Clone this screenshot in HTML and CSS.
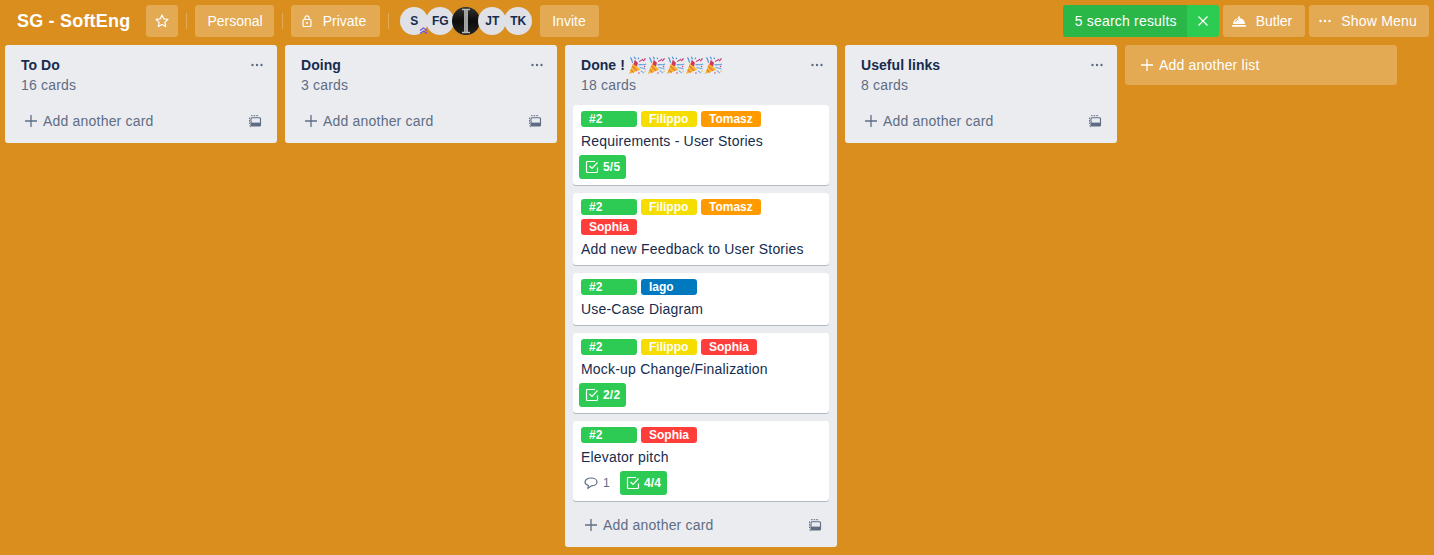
FILE: index.html
```html
<!DOCTYPE html>
<html>
<head>
    <title>SG - SoftEng</title>
    <link rel="stylesheet" href="styles.css">
</head>
<body>
    <svg class="defs" width="0" height="0">
        <symbol id="popper" viewBox="0 0 20 20">
            <path d="M1 19 L5.500 7 L13 14.500 Z" fill="#f5b52e"/>
            <path d="M3 14.500 L6 17.500 M4.500 10.500 L9.500 15.500" stroke="#e8793a" stroke-width="1.200"/>
            <path d="M6 9 L7 4 L10.500 7 L9.500 11 Z" fill="#d1365f"/>
            <path d="M5 7 C3.500 5 4.500 3 2.500 1.500 M8 3.500 L6.500 .8" stroke="#4a8fd6" stroke-width="1.200" fill="none"/>
            <path d="M12 6 C13 4 15 5.500 15.500 3 M16 5.500 L18.500 2.500" stroke="#c73a78" stroke-width="1.300" fill="none"/>
            <path d="M11 9.500 C13.500 8 16 10.500 19 8.500" stroke="#5b9ddd" stroke-width="1.200" fill="none"/>
            <path d="M12 12 L18.500 13.500 M13.500 15.500 L17 18" stroke="#7fb0e0" stroke-width="1.200"/>
            <circle cx="11" cy="2.500" r=".8" fill="#4a8fd6"/>
            <circle cx="17.500" cy="11" r=".8" fill="#c73a78"/>
            <circle cx="11.500" cy="18" r=".8" fill="#c73a78"/>
            <circle cx="18" cy="16" r=".7" fill="#f5b52e"/>
        </symbol>
        <symbol id="plus" viewBox="0 0 14 14">
            <path d="M7 1 V13 M1 7 H13" stroke="currentColor" stroke-width="1.300" fill="none"/>
        </symbol>
        <symbol id="template" viewBox="0 0 14 14">
            <path d="M3 1.700 H11 M1.500 3.500 V10 M12.500 4 V5" stroke="currentColor" stroke-width="1" fill="none" stroke-dasharray="1.600 1"/>
            <rect x="3" y="3.700" width="9.500" height="8.300" rx="1" fill="none" stroke="currentColor" stroke-width="1.100"/>
            <rect x="3" y="8.600" width="9.500" height="3.400" fill="currentColor"/>
            <path d="M2 11 V12 a1 1 0 0 0 1 1" stroke="currentColor" stroke-width=".8" fill="none"/>
        </symbol>
        <symbol id="dots" viewBox="0 0 14 4">
            <circle cx="2.500" cy="2" r="1.200" fill="currentColor"/>
            <circle cx="7" cy="2" r="1.200" fill="currentColor"/>
            <circle cx="11.500" cy="2" r="1.200" fill="currentColor"/>
        </symbol>
        <symbol id="check" viewBox="0 0 14 14">
            <path d="M12.500 7.500 V11.500 a1 1 0 0 1 -1 1 H2.500 a1 1 0 0 1 -1 -1 V2.500 a1 1 0 0 1 1 -1 H10" fill="none" stroke="currentColor" stroke-width="1.200"/>
            <path d="M4.500 6 L7 8.500 L12.500 2.500" fill="none" stroke="currentColor" stroke-width="1.200"/>
        </symbol>
    </svg>

    <header class="board-header">
        <h1 class="board-name">SG - SoftEng</h1>
        <a class="btn btn-icon">
            <svg width="14" height="14" viewBox="0 0 14 14"><path d="M7 1 L8.800 4.900 L13 5.400 L9.900 8.300 L10.700 12.600 L7 10.500 L3.300 12.600 L4.100 8.300 L1 5.400 L5.200 4.900 Z" fill="none" stroke="#fff" stroke-width="1.200" stroke-linejoin="round"/></svg>
        </a>
        <span class="sep"></span>
        <a class="btn btn-team">Personal</a>
        <span class="sep"></span>
        <a class="btn btn-private">
            <svg width="12" height="14" viewBox="0 0 12 14"><rect x="2" y="5.500" width="8" height="7" rx="1" fill="none" stroke="#fff" stroke-width="1.200"/><path d="M4 5.500 V3.800 a2 2 0 0 1 4 0 V5.500" fill="none" stroke="#fff" stroke-width="1.200"/><circle cx="6" cy="9" r="1" fill="#fff"/></svg>
            Private
        </a>
        <span class="sep"></span>
        <div class="members">
            <span class="avatar">S
                <svg class="admin-mark" width="9" height="8" viewBox="0 0 9 8"><path d="M1 3.500 L4.500 1 L8 3.500 M1 6.500 L4.500 4 L8 6.500" fill="none" stroke="#6b4fd8" stroke-width="1.100"/></svg>
            </span>
            <span class="avatar">FG</span>
            <span class="avatar avatar-dark">
                <svg width="28" height="28" viewBox="0 0 28 28"><path d="M10 2.500 H18 M10 25.500 H18" stroke="#b8b8b8" stroke-width="1.500"/><rect x="12.200" y="3" width="3.600" height="22" fill="#c9c9c9"/><rect x="13.200" y="3" width="1.400" height="22" fill="#8d8d8d"/></svg>
            </span>
            <span class="avatar">JT</span>
            <span class="avatar">TK</span>
        </div>
        <a class="btn btn-invite">Invite</a>
        <div class="header-right">
            <div class="search-results">
                <span class="search-count">5 search results</span>
                <span class="search-clear">
                    <svg width="12" height="12" viewBox="0 0 12 12"><path d="M1.500 1.500 L10.500 10.500 M10.500 1.500 L1.500 10.500" stroke="#fff" stroke-width="1.200"/></svg>
                </span>
            </div>
            <a class="btn btn-butler">
                <svg width="16" height="14" viewBox="0 0 16 14"><path d="M2 10 a6 6 0 0 1 12 0 Z" fill="#fff"/><path d="M4.500 8 a4 4 0 0 1 3 -3" stroke="#da8e1e" stroke-width=".8" fill="none"/><rect x="1" y="11" width="14" height="1.800" rx=".9" fill="#fff"/><circle cx="8" cy="3.200" r="1" fill="#fff"/></svg>
                Butler
            </a>
            <a class="btn btn-menu">
                <svg class="menu-dots" width="14" height="4"><use href="#dots"/></svg>
                Show Menu
            </a>
        </div>
    </header>

    <main class="board">
        <section class="list">
            <div class="list-head">
                <h2>To Do</h2>
                <p>16 cards</p>
                <svg class="list-dots" width="14" height="4"><use href="#dots"/></svg>
            </div>
            <div class="add-card">
                <svg width="14" height="14"><use href="#plus"/></svg>
                <span>Add another card</span>
                <svg class="tpl" width="14" height="14"><use href="#template"/></svg>
            </div>
        </section>

        <section class="list">
            <div class="list-head">
                <h2>Doing</h2>
                <p>3 cards</p>
                <svg class="list-dots" width="14" height="4"><use href="#dots"/></svg>
            </div>
            <div class="add-card">
                <svg width="14" height="14"><use href="#plus"/></svg>
                <span>Add another card</span>
                <svg class="tpl" width="14" height="14"><use href="#template"/></svg>
            </div>
        </section>

        <section class="list">
            <div class="list-head">
                <h2>Done !
                    <span class="poppers">
                        <svg width="19" height="19"><use href="#popper"/></svg>
                        <svg width="19" height="19"><use href="#popper"/></svg>
                        <svg width="19" height="19"><use href="#popper"/></svg>
                        <svg width="19" height="19"><use href="#popper"/></svg>
                        <svg width="19" height="19"><use href="#popper"/></svg>
                    </span>
                </h2>
                <p>18 cards</p>
                <svg class="list-dots" width="14" height="4"><use href="#dots"/></svg>
            </div>

            <article class="card">
                <div class="labels">
                    <span class="label green">#2</span>
                    <span class="label yellow">Filippo</span>
                    <span class="label orange">Tomasz</span>
                </div>
                <div class="card-title">Requirements - User Stories</div>
                <div class="badges">
                    <span class="badge-check"><svg width="14" height="14"><use href="#check"/></svg>5/5</span>
                </div>
            </article>

            <article class="card">
                <div class="labels">
                    <span class="label green">#2</span>
                    <span class="label yellow">Filippo</span>
                    <span class="label orange">Tomasz</span>
                    <span class="label red">Sophia</span>
                </div>
                <div class="card-title">Add new Feedback to User Stories</div>
            </article>

            <article class="card">
                <div class="labels">
                    <span class="label green">#2</span>
                    <span class="label blue">Iago</span>
                </div>
                <div class="card-title">Use-Case Diagram</div>
            </article>

            <article class="card">
                <div class="labels">
                    <span class="label green">#2</span>
                    <span class="label yellow">Filippo</span>
                    <span class="label red">Sophia</span>
                </div>
                <div class="card-title">Mock-up Change/Finalization</div>
                <div class="badges">
                    <span class="badge-check"><svg width="14" height="14"><use href="#check"/></svg>2/2</span>
                </div>
            </article>

            <article class="card">
                <div class="labels">
                    <span class="label green">#2</span>
                    <span class="label red">Sophia</span>
                </div>
                <div class="card-title">Elevator pitch</div>
                <div class="badges">
                    <span class="badge-comment">
                        <svg width="14" height="14" viewBox="0 0 14 14"><path d="M7 2 C10.500 2 13 3.700 13 6 C13 8.300 10.500 9.800 7.500 9.800 L4 12.200 L4.300 9.400 C2.300 8.800 1 7.600 1 6 C1 3.700 3.500 2 7 2 Z" fill="none" stroke="currentColor" stroke-width="1.200"/></svg>
                        1
                    </span>
                    <span class="badge-check"><svg width="14" height="14"><use href="#check"/></svg>4/4</span>
                </div>
            </article>

            <div class="add-card">
                <svg width="14" height="14"><use href="#plus"/></svg>
                <span>Add another card</span>
                <svg class="tpl" width="14" height="14"><use href="#template"/></svg>
            </div>
        </section>

        <section class="list">
            <div class="list-head">
                <h2>Useful links</h2>
                <p>8 cards</p>
                <svg class="list-dots" width="14" height="4"><use href="#dots"/></svg>
            </div>
            <div class="add-card">
                <svg width="14" height="14"><use href="#plus"/></svg>
                <span>Add another card</span>
                <svg class="tpl" width="14" height="14"><use href="#template"/></svg>
            </div>
        </section>

        <div class="add-list">
            <svg width="14" height="14"><use href="#plus"/></svg>
            <span>Add another list</span>
        </div>
    </main>
</body>
</html>
```

FILE: styles.css
```css
* {
    box-sizing: border-box;
}

html, body {
    height: 100%;
}

body {
    margin: 0;
    background-color: #da8e1e;
    font-family: "Liberation Sans", Arial, sans-serif;
    font-size: 14px;
    line-height: 20px;
    letter-spacing: 0.2px;
    color: #172b4d;
    overflow: hidden;
}

.defs {
    display: block;
    height: 0;
}

svg {
    display: block;
    flex: none;
}

/* header */
.board-header {
    display: flex;
    align-items: center;
    height: 45px;
    padding: 0 5px 3px 17px;
}

.board-name {
    margin: 0 16px 0 0;
    font-size: 18px;
    line-height: 32px;
    font-weight: 700;
    color: #fff;
}

.btn {
    display: flex;
    align-items: center;
    height: 32px;
    padding: 0 12px;
    border-radius: 3px;
    background-color: rgba(255, 255, 255, 0.24);
    color: #fff;
    letter-spacing: 0;
}

.btn-icon {
    width: 32px;
    padding: 0;
    justify-content: center;
}

.btn-team {
    padding-right: 11px;
}

.btn-private {
    padding: 0 14px 0 10px;
}

.btn-private svg {
    margin-right: 10px;
}

.sep {
    width: 1px;
    height: 16px;
    margin: 0 8px;
    background-color: rgba(255, 255, 255, 0.24);
}

.members {
    display: flex;
    margin-left: 3px;
    margin-right: 8px;
}

.avatar {
    position: relative;
    display: flex;
    align-items: center;
    justify-content: center;
    width: 28px;
    height: 28px;
    margin-right: -2px;
    border-radius: 50%;
    background-color: #dfe1e6;
    font-size: 12px;
    font-weight: 700;
    letter-spacing: 0;
}

.avatar-dark {
    background: linear-gradient(#333, #0c0c0c 50%, #222);
}

.admin-mark {
    position: absolute;
    right: 0;
    bottom: 0;
    z-index: 1;
}

.btn-invite {
    margin-left: 2px;
    padding-right: 13px;
}

.header-right {
    display: flex;
    gap: 4px;
    margin-left: auto;
}

.search-results {
    display: flex;
    height: 32px;
    border-radius: 3px;
    overflow: hidden;
    color: #fff;
}

.search-count {
    display: flex;
    align-items: center;
    width: 124px;
    padding-left: 12px;
    background-color: #2ab748;
}

.search-clear {
    display: flex;
    align-items: center;
    justify-content: center;
    width: 32px;
    background-color: #2ccb52;
}

.btn-butler {
    padding: 0 13px 0 8px;
}

.btn-butler svg {
    margin-right: 9px;
}

.btn-menu {
    padding: 0 12px 0 9px;
    letter-spacing: 0.2px;
}

.menu-dots {
    margin-right: 9px;
}

/* lists */
.board {
    display: flex;
    align-items: flex-start;
    gap: 8px;
    padding: 0 5px;
}

.list {
    flex: none;
    width: 272px;
    padding: 10px 8px 8px;
    border-radius: 3px;
    background-color: #ebecf0;
}

.list-head {
    position: relative;
    padding: 0 8px 10px;
}

.list-head h2 {
    display: flex;
    align-items: center;
    margin: 0;
    height: 20px;
    font-size: 14px;
    line-height: 20px;
    font-weight: 700;
    letter-spacing: 0.05px;
}

.list-head p {
    margin: 0;
    color: #5e6c84;
}

.list-dots {
    position: absolute;
    top: 8px;
    right: 5px;
    color: #5e6c84;
}

.poppers {
    display: flex;
    margin-left: 3px;
}

.add-card {
    display: flex;
    align-items: center;
    height: 28px;
    margin-top: 2px;
    padding: 0 8px 0 11px;
    color: #5e6c84;
}

.card + .add-card {
    margin-top: 10px;
}

.add-card span {
    margin-left: 5px;
}

.tpl {
    margin-left: auto;
    margin-right: -1px;
}

.add-list {
    display: flex;
    align-items: center;
    width: 272px;
    height: 40px;
    padding: 0 15px;
    border-radius: 3px;
    background-color: rgba(255, 255, 255, 0.24);
    color: #fff;
}

.add-list span {
    margin-left: 5px;
}

/* cards */
.card {
    margin-bottom: 8px;
    padding: 6px 8px;
    border-radius: 3px;
    background-color: #fff;
    box-shadow: 0 1px 0 rgba(9, 30, 66, 0.25);
}

.labels {
    display: flex;
    flex-wrap: wrap;
}

.label {
    min-width: 56px;
    height: 16px;
    margin: 0 4px 4px 0;
    padding: 0 8px;
    border-radius: 3px;
    font-size: 12px;
    line-height: 16px;
    font-weight: 700;
    letter-spacing: 0;
    color: #fff;
}

.green { background-color: #2dcb54; }
.yellow { background-color: #f5dd00; }
.orange { background-color: #ff9a00; }
.red { background-color: #ff3e3b; }
.blue { background-color: #0079bf; }

.badges {
    display: flex;
    align-items: center;
    margin: 4px 0 0 -2px;
}

.badge-check {
    display: flex;
    align-items: center;
    gap: 4px;
    height: 24px;
    padding: 0 6px;
    border-radius: 3px;
    background-color: #2dcb54;
    color: #fff;
    font-size: 12px;
    font-weight: 700;
}

.badge-comment {
    display: flex;
    align-items: center;
    gap: 5px;
    height: 24px;
    padding: 0 5px;
    margin-right: 5px;
    color: #5e6c84;
    font-size: 12px;
}
```
